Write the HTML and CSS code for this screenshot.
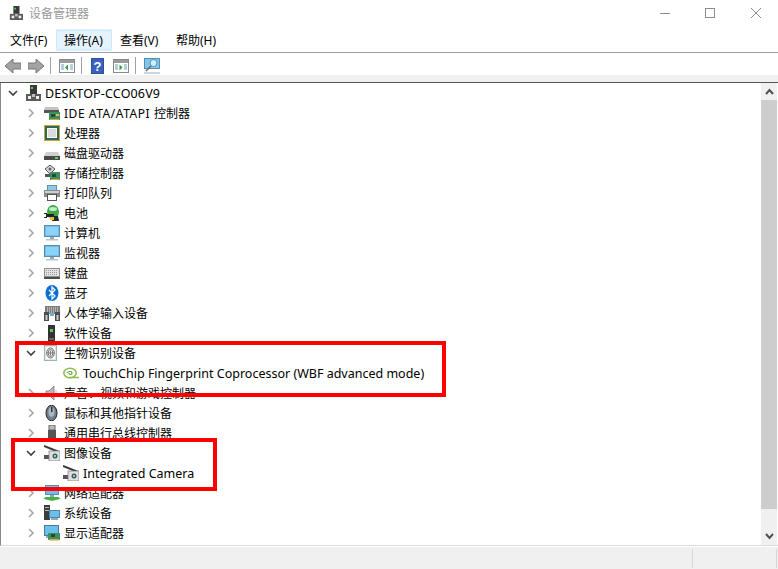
FILE: index.html
```html
<!DOCTYPE html>
<html lang="zh-CN">
<head>
<meta charset="utf-8">
<title>设备管理器</title>
<link rel="stylesheet" href="styles.css">
</head>
<body>
<svg class="defs" aria-hidden="true">
  <symbol id="i-pc" viewBox="0 0 16 16"><rect x="5" y="0" width="7" height="9" fill="#3a3a3a"/><rect x="6" y="2" width="2" height="2" fill="#4fd04f"/><rect x="1" y="9" width="15" height="7" fill="#5b5b5b"/><rect x="3" y="11" width="3" height="3" fill="#eee"/><rect x="11" y="11" width="3" height="3" fill="#eee"/><rect x="7" y="9" width="3" height="3" fill="#bbb"/></symbol>
  <symbol id="i-ide" viewBox="0 0 16 16"><path d="M1 2h13l1 3H0z" fill="#c4c4c4"/><rect x="0" y="5" width="15" height="3" fill="#555"/><rect x="5" y="7" width="11" height="8" fill="#3f8f62"/><rect x="7" y="9" width="4" height="3" fill="#1f4d36"/><rect x="12" y="9" width="3" height="2" fill="#e0c050"/><rect x="6" y="14" width="9" height="1" fill="#d8a838"/></symbol>
  <symbol id="i-cpu" viewBox="0 0 16 16"><rect x="0" y="0" width="16" height="16" fill="#c8a83c"/><rect x="1" y="1" width="14" height="14" fill="#2f6a50"/><rect x="3.500" y="3.500" width="9" height="9" fill="#dcdcdc" stroke="#f4f4f4"/></symbol>
  <symbol id="i-disk" viewBox="0 0 16 16"><path d="M2 7h12l2 4H0z" fill="#d0d0d0"/><rect x="0" y="11" width="16" height="4" fill="#4a4a4a"/><rect x="11" y="12" width="3" height="2" fill="#56d456"/></symbol>
  <symbol id="i-store" viewBox="0 0 16 16"><path d="M1 4l5-4 5 4-5 5z" fill="#d5d5d5" stroke="#555"/><circle cx="6" cy="4" r="1.500" fill="#666"/><rect x="1" y="9" width="5" height="3" fill="#555"/><rect x="6" y="7" width="10" height="8" fill="#3f8f62"/><rect x="8" y="9" width="4" height="3" fill="#1f4d36"/><rect x="7" y="14" width="8" height="1" fill="#d8a838"/></symbol>
  <symbol id="i-print" viewBox="0 0 16 16"><rect x="3.500" y="0.500" width="9" height="5" fill="#8fc7ea" stroke="#5c8fb0"/><rect x="0" y="5" width="16" height="7" fill="#8a8a8a"/><rect x="1" y="6" width="14" height="2" fill="#cfcfcf"/><rect x="3.500" y="9.500" width="9" height="6" fill="#fff" stroke="#555"/></symbol>
  <symbol id="i-batt" viewBox="0 0 16 16"><ellipse cx="9" cy="7" rx="6" ry="7" fill="#3da84a"/><ellipse cx="9" cy="4" rx="4" ry="2" fill="#bfeec3"/><rect x="2" y="9" width="8" height="3" fill="#222"/><rect x="0" y="8" width="3" height="1" fill="#222"/><rect x="0" y="12" width="3" height="1" fill="#222"/><path d="M9 11h5l1 5H8z" fill="#2a2a2a"/><rect x="6" y="12" width="4" height="3" fill="#e6c040"/></symbol>
  <symbol id="i-monitor" viewBox="0 0 16 16"><rect x="0.500" y="0.500" width="15" height="11" fill="#6cc0ee" stroke="#5a8cab"/><rect x="2" y="2" width="12" height="8" fill="#8ed2f6"/><rect x="6" y="12" width="4" height="2" fill="#9aa9b3"/><rect x="2" y="14" width="12" height="1.500" fill="#b8c4cc"/></symbol>
  <symbol id="i-kbd" viewBox="0 0 16 16"><rect x="0" y="3" width="16" height="11" fill="#8d8d8d"/><rect x="1" y="4" width="14" height="7" fill="#e3e3e3"/><path d="M2 5.500h12M2 7.500h12M2 9.500h12" stroke="#9a9a9a" stroke-dasharray="1 1"/><rect x="0" y="12" width="16" height="2" fill="#4d4d4d"/></symbol>
  <symbol id="i-bt" viewBox="0 0 16 16"><ellipse cx="8" cy="8" rx="6.500" ry="8" fill="#0a6fd0"/><path d="M5 5l6 6-3 3V2l3 3-6 6" fill="none" stroke="#fff" stroke-width="1.200"/></symbol>
  <symbol id="i-hid" viewBox="0 0 16 16"><rect x="1" y="1" width="15" height="8" fill="#7d7d7d"/><path d="M3 3h11M3 5h11M3 7h11" stroke="#e8e8e8" stroke-dasharray="1 1"/><path d="M0 7h5v9H0zM11 7h5v9h-5z" fill="#4e4e4e"/><rect x="6" y="8" width="4" height="3" fill="#6cb0dc"/><rect x="1.500" y="10" width="2" height="5" fill="#ccc"/><rect x="12.500" y="10" width="2" height="5" fill="#ccc"/></symbol>
  <symbol id="i-soft" viewBox="0 0 16 16"><rect x="4" y="0" width="7" height="16" fill="#333"/><rect x="6" y="4" width="3" height="3" fill="#54d454"/><rect x="5" y="13" width="5" height="2" fill="#666"/></symbol>
  <symbol id="i-finger" viewBox="0 0 16 16"><rect x="0.500" y="0.500" width="12" height="15" fill="#dfe9e2" stroke="#9fb5a8"/><rect x="2" y="2" width="9" height="12" fill="#fff"/><ellipse cx="6.500" cy="8" rx="3.800" ry="5" fill="none" stroke="#666"/><ellipse cx="6.500" cy="8" rx="2.300" ry="3.500" fill="none" stroke="#777"/><path d="M6.500 5.500v5M3 8h7" stroke="#777"/></symbol>
  <symbol id="i-touch" viewBox="0 0 16 16"><ellipse cx="7" cy="8" rx="6.200" ry="4.800" fill="none" stroke="#8ebd52" stroke-width="1.500"/><path d="M4 8c1-2 5-2 5 0s-3 2-3 0" fill="none" stroke="#6f9f3a" stroke-width="1.200"/><path d="M6 12.500h10" stroke="#8ebd52" stroke-width="1.500"/></symbol>
  <symbol id="i-sound" viewBox="0 0 16 16"><path d="M2 6h3l5-5v14l-5-5H2z" fill="#b9b9b9" stroke="#8b8b8b"/><path d="M12 5v6" stroke="#bbb"/></symbol>
  <symbol id="i-mouse" viewBox="0 0 16 16"><ellipse cx="7.500" cy="8" rx="5.500" ry="7.800" fill="#6f7f8c" stroke="#222"/><ellipse cx="7.500" cy="7" rx="3" ry="5" fill="#a8b8c4"/><rect x="7" y="2" width="1.500" height="5" fill="#333"/></symbol>
  <symbol id="i-usb" viewBox="0 0 16 16"><rect x="5" y="0" width="6" height="5" fill="#bbb" stroke="#666"/><rect x="4" y="5" width="8" height="8" fill="#555"/><rect x="7" y="13" width="2" height="3" fill="#333"/></symbol>
  <symbol id="i-cam" viewBox="0 0 16 16"><path d="M0 1l15 6" stroke="#3a3a3a" stroke-width="2"/><path d="M0 10h5v4H0z" fill="#555"/><rect x="5" y="6" width="11" height="10" fill="#dfdfdf" stroke="#777" stroke-width=".7"/><circle cx="11" cy="11" r="2.500" fill="#3d5a5f"/><circle cx="11" cy="11" r="1" fill="#9fd"/></symbol>
  <symbol id="i-net" viewBox="0 0 16 16"><rect x="1.500" y="0.500" width="13" height="9" fill="#6cc0ee" stroke="#5a8cab"/><rect x="6" y="10" width="4" height="2" fill="#8aa"/><path d="M1 12h14l1 2-8 2-8-2z" fill="#46b04a"/></symbol>
  <symbol id="i-sys" viewBox="0 0 16 16"><rect x="0" y="0" width="6" height="15" fill="#3c3c3c"/><rect x="1" y="2" width="4" height="1" fill="#bbb"/><rect x="1" y="5" width="4" height="1" fill="#bbb"/><rect x="5.500" y="5.500" width="10" height="7" fill="#6cc0ee" stroke="#4a86a8"/><rect x="7" y="13" width="7" height="2" fill="#9aa9b3"/></symbol>
  <symbol id="i-gpu" viewBox="0 0 16 16"><rect x="0.500" y="0.500" width="14" height="10" fill="#6cc0ee" stroke="#4a7c98"/><rect x="4" y="8" width="12" height="7" fill="#3f8f62"/><rect x="7" y="9" width="4" height="3" fill="#1f4d36"/><rect x="5" y="14" width="10" height="1.500" fill="#d8a838"/><rect x="2" y="11" width="2" height="2" fill="#9aa9b3"/></symbol>
  <symbol id="i-chev-r" viewBox="0 0 16 16"><path d="M6 4l4 4-4 4" fill="none" stroke="#a6a6a6" stroke-width="1.600"/></symbol>
  <symbol id="i-chev-d" viewBox="0 0 16 16"><path d="M4 6l4 4 4-4" fill="none" stroke="#404040" stroke-width="1.600"/></symbol>
</svg>

<div class="window">
  <header class="titlebar">
    <svg class="title-icon"><use href="#i-pc"/></svg>
    <span class="title-text">设备管理器</span>
    <div class="controls">
      <svg class="ctl" viewBox="0 0 46 20"><path d="M20 10.500h10" stroke="#8c8c8c"/></svg>
      <svg class="ctl" viewBox="0 0 46 20"><rect x="19.500" y="5.500" width="9" height="9" fill="none" stroke="#8c8c8c"/></svg>
      <svg class="ctl" viewBox="0 0 46 20"><path d="M19 5l10 10M29 5L19 15" stroke="#8c8c8c"/></svg>
    </div>
  </header>

  <nav class="menubar">
    <span class="menu menu-first">文件(F)</span>
    <span class="menu menu-active">操作(A)</span>
    <span class="menu">查看(V)</span>
    <span class="menu">帮助(H)</span>
  </nav>

  <div class="toolbar">
    <svg class="tool tool-arrow" viewBox="0 0 16 16"><path d="M8 1L0 8l8 7v-4h8V5H8z" fill="#a3a3a3" stroke="#777"/></svg>
    <svg class="tool tool-arrow" viewBox="0 0 16 16"><path d="M8 1l8 7-8 7v-4H0V5h8z" fill="#a3a3a3" stroke="#777"/></svg>
    <span class="sep"></span>
    <svg class="tool" viewBox="0 0 16 16"><rect x="0.500" y="1.500" width="15" height="13" fill="#fff" stroke="#8a8a8a"/><rect x="1" y="2" width="14" height="3" fill="#9a9a9a"/><path d="M2 7h3M2 9h3M2 11h3M11 7h3M11 9h3M11 11h3" stroke="#6c9cb8"/><path d="M9 6.500v6L6 9.500z" fill="#2aa23a"/></svg>
    <span class="sep"></span>
    <svg class="tool tool-help" viewBox="0 0 13 16"><rect width="13" height="16" fill="#2f4f9f"/><rect x="1" y="1" width="11" height="14" fill="#3a62bc"/><text x="6.500" y="13" class="help-q">?</text></svg>
    <svg class="tool tool-after-help" viewBox="0 0 16 16"><rect x="0.500" y="1.500" width="15" height="13" fill="#fff" stroke="#8a8a8a"/><rect x="1" y="2" width="14" height="3" fill="#9a9a9a"/><path d="M2 7h3M2 9h3M2 11h3M11 7h3M11 9h3M11 11h3" stroke="#6c9cb8"/><path d="M6.500 6.500v6L9.500 9.500z" fill="#2aa23a"/></svg>
    <span class="sep"></span>
    <svg class="tool" viewBox="0 0 16 16"><rect x="0.500" y="0.500" width="15" height="10" fill="#7cc8ee" stroke="#5a8cab"/><circle cx="9.500" cy="5" r="3.500" fill="#cfeeff" stroke="#5f8ea8"/><path d="M7 8l-5 5" stroke="#666" stroke-width="1.500"/><path d="M0 15h16" stroke="#9ab"/></svg>
  </div>

  <div class="band"></div>

  <main class="content">
    <ul class="tree">
      <li class="row row-root"><svg class="chev"><use href="#i-chev-d"/></svg><svg class="icon"><use href="#i-pc"/></svg><span class="latin-root">DESKTOP-CCO06V9</span></li>
      <li class="row"><svg class="chev"><use href="#i-chev-r"/></svg><svg class="icon"><use href="#i-ide"/></svg><span><span class="latin-caps">IDE ATA/ATAPI </span>控制器</span></li>
      <li class="row"><svg class="chev"><use href="#i-chev-r"/></svg><svg class="icon"><use href="#i-cpu"/></svg><span>处理器</span></li>
      <li class="row"><svg class="chev"><use href="#i-chev-r"/></svg><svg class="icon"><use href="#i-disk"/></svg><span>磁盘驱动器</span></li>
      <li class="row"><svg class="chev"><use href="#i-chev-r"/></svg><svg class="icon"><use href="#i-store"/></svg><span>存储控制器</span></li>
      <li class="row"><svg class="chev"><use href="#i-chev-r"/></svg><svg class="icon"><use href="#i-print"/></svg><span>打印队列</span></li>
      <li class="row"><svg class="chev"><use href="#i-chev-r"/></svg><svg class="icon"><use href="#i-batt"/></svg><span>电池</span></li>
      <li class="row"><svg class="chev"><use href="#i-chev-r"/></svg><svg class="icon"><use href="#i-monitor"/></svg><span>计算机</span></li>
      <li class="row"><svg class="chev"><use href="#i-chev-r"/></svg><svg class="icon"><use href="#i-monitor"/></svg><span>监视器</span></li>
      <li class="row"><svg class="chev"><use href="#i-chev-r"/></svg><svg class="icon"><use href="#i-kbd"/></svg><span>键盘</span></li>
      <li class="row"><svg class="chev"><use href="#i-chev-r"/></svg><svg class="icon"><use href="#i-bt"/></svg><span>蓝牙</span></li>
      <li class="row"><svg class="chev"><use href="#i-chev-r"/></svg><svg class="icon"><use href="#i-hid"/></svg><span>人体学输入设备</span></li>
      <li class="row"><svg class="chev"><use href="#i-chev-r"/></svg><svg class="icon"><use href="#i-soft"/></svg><span>软件设备</span></li>
      <li class="row"><svg class="chev"><use href="#i-chev-d"/></svg><svg class="icon"><use href="#i-finger"/></svg><span>生物识别设备</span></li>
      <li class="row row-child"><svg class="icon"><use href="#i-touch"/></svg><span class="latin">TouchChip Fingerprint Coprocessor (WBF advanced mode)</span></li>
      <li class="row"><svg class="chev"><use href="#i-chev-r"/></svg><svg class="icon"><use href="#i-sound"/></svg><span>声音、视频和游戏控制器</span></li>
      <li class="row"><svg class="chev"><use href="#i-chev-r"/></svg><svg class="icon"><use href="#i-mouse"/></svg><span>鼠标和其他指针设备</span></li>
      <li class="row"><svg class="chev"><use href="#i-chev-r"/></svg><svg class="icon"><use href="#i-usb"/></svg><span>通用串行总线控制器</span></li>
      <li class="row"><svg class="chev"><use href="#i-chev-d"/></svg><svg class="icon"><use href="#i-cam"/></svg><span>图像设备</span></li>
      <li class="row row-child"><svg class="icon"><use href="#i-cam"/></svg><span class="latin">Integrated Camera</span></li>
      <li class="row"><svg class="chev"><use href="#i-chev-r"/></svg><svg class="icon"><use href="#i-net"/></svg><span>网络适配器</span></li>
      <li class="row"><svg class="chev"><use href="#i-chev-r"/></svg><svg class="icon"><use href="#i-sys"/></svg><span>系统设备</span></li>
      <li class="row"><svg class="chev"><use href="#i-chev-r"/></svg><svg class="icon"><use href="#i-gpu"/></svg><span>显示适配器</span></li>
    </ul>
    <aside class="scrollbar">
      <svg class="sb-arrow" viewBox="0 0 9 7"><path d="M1 6l3.500-4L8 6" fill="none" stroke="#505050" stroke-width="2"/></svg>
      <div class="sb-thumb"></div>
      <svg class="sb-arrow sb-arrow-down" viewBox="0 0 9 7"><path d="M1 1l3.500 4L8 1" fill="none" stroke="#505050" stroke-width="2"/></svg>
    </aside>
  </main>

  <footer class="statusbar">
    <span class="status-main"></span>
    <span class="status-side"></span>
  </footer>

  <div class="callout callout-bio"></div>
  <div class="callout callout-cam"></div>
</div>
</body>
</html>
```

FILE: styles.css
```css
* { box-sizing: border-box; }
html, body { margin: 0; padding: 0; background: #fff; }
.defs { position: absolute; width: 0; height: 0; }
.window {
  position: relative;
  width: 778px;
  height: 569px;
  overflow: hidden;
  display: flex;
  flex-direction: column;
  font-family: "Noto Sans", "Noto Sans CJK SC", sans-serif;
  font-size: 12px;
  color: #000;
  background: #fff;
}
.titlebar { height: 29px; display: flex; align-items: center; padding: 0 0 4px 9px; flex: none; }
.title-icon { width: 14px; height: 16px; flex: none; }
.title-text { margin-left: 6px; color: #999; font-family: "Noto Sans CJK SC", sans-serif; }
.controls { margin-left: auto; display: flex; }
.ctl { width: 46px; height: 20px; display: block; }
.menubar {
  height: 24px;
  flex: none;
  display: flex;
  padding: 0 0 1px 2px;
  border-bottom: 1px solid #a0a0a0;
}
.menu {
  width: 56px;
  padding: 0 8px;
  line-height: 21px;
  border: 1px solid transparent;
  border-width: 1px 0;
  white-space: nowrap;
}
.menu-first { width: 54px; }
.menu-active { background: #e5f3ff; box-shadow: inset 0 0 0 1px #cce8ff; }
.toolbar { height: 22px; flex: none; display: flex; align-items: center; padding: 3px 0 0 5px; }
.tool { width: 16px; height: 16px; flex: none; display: block; }
.tool-arrow + .tool-arrow { margin-left: 7px; }
.tool-help { width: 13px; margin-left: 1px; }
.tool-after-help { margin-left: 9px; }
.help-q { fill: #fff; font: bold 13px "Liberation Sans", sans-serif; text-anchor: middle; }
.sep { width: 1px; height: 17px; background: #a0a0a0; flex: none; margin: 0 8px 0 6px; }
.band { height: 8px; flex: none; background: #f0f0f0; border-bottom: 1px solid #555; }
.content { flex: 1; display: flex; min-height: 0; border-left: 1px solid #8a8a8a; border-bottom: 1px solid #dcdcdc; }
.tree { list-style: none; margin: 0; padding: 0; flex: 1; overflow: hidden; }
.row { height: 20px; display: flex; align-items: center; padding-left: 22px; white-space: nowrap; }
.row-root { padding-left: 4px; }
.row-child { padding-left: 62px; }
.chev { width: 16px; height: 16px; flex: none; }
.icon { width: 16px; height: 16px; flex: none; margin: 0 4px 0 5px; }
.row-root .icon { margin: 0 4px 0 4px; }
.row-child .icon { margin-left: 0; }
.latin { font-size: 12.5px; }
.latin-root { font-size: 12.5px; letter-spacing: .16px; }
.latin-caps { letter-spacing: .55px; }
.scrollbar {
  width: 16px;
  margin-right: 1px;
  background: #f0f0f0;
  display: flex;
  flex-direction: column;
  align-items: center;
  flex: none;
}
.sb-arrow { width: 9px; height: 7px; margin: 5px 0; flex: none; display: block; }
.sb-thumb { width: 16px; height: 409px; background: #cdcdcd; flex: none; }
.sb-arrow-down { margin-top: auto; margin-bottom: 5px; }
.statusbar { height: 23px; flex: none; display: flex; background: #f0f0f0; padding: 2px 0 1px; border-top: 1px solid #fff; }
.status-main { width: 693px; border-right: 1px solid #d7d7d7; }
.status-side { width: 84px; border-right: 1px solid #d7d7d7; }
.callout { position: absolute; border: 4px solid #f00; }
.callout-bio { left: 15px; top: 341px; width: 431px; height: 56px; }
.callout-cam { left: 11px; top: 438px; width: 206px; height: 53px; }
```
